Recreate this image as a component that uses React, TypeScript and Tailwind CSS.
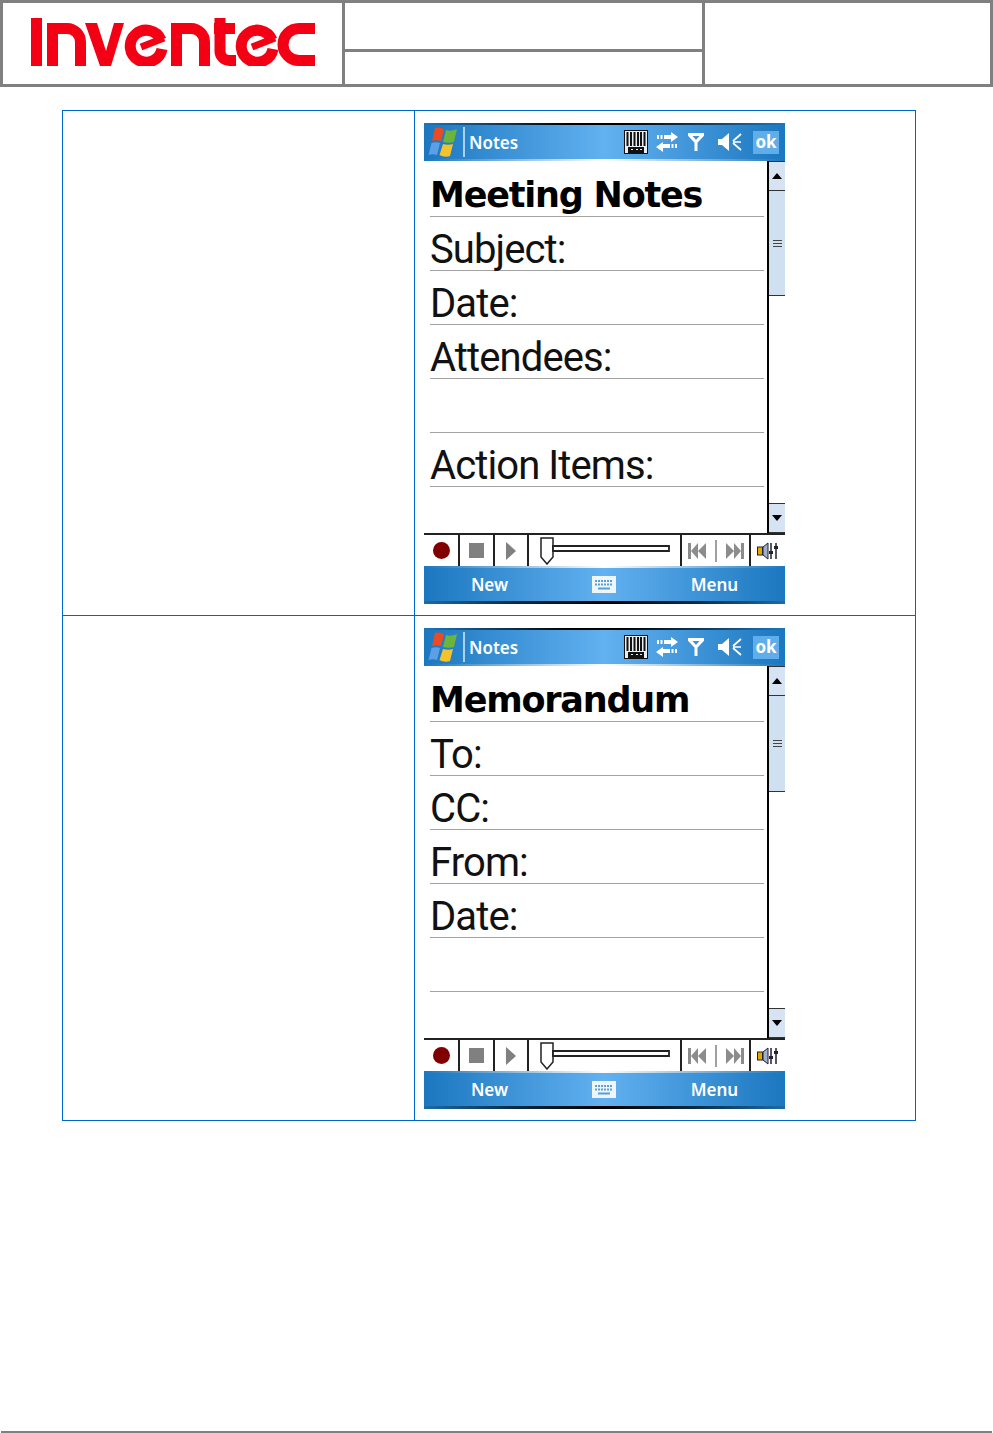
const TAHOMA = "font-['Noto_Sans','DejaVu_Sans',sans-serif]"

function Logo() {
  return (
    <svg width="284" height="48" viewBox="0 0 284 48" fill="none" stroke="#f40015" strokeWidth="11">
      <rect x="0" y="0" width="11" height="48" fill="#f40015" stroke="none" />
      <path d="M21.5 48V10.5H36A13.5 13.5 0 0 1 49.5 24V48" />
      <path d="M54 5H66L75 33L83 5H93L80 48H69Z" fill="#f40015" stroke="none" />
      <path d="M130 22A16 16 0 1 0 131 31" />
      <path d="M110 29L133 20" strokeWidth="7" />
      <path d="M145.5 48V10.5H160A13.5 13.5 0 0 1 173.5 24V48" />
      <path d="M189 0V33A9.5 9.5 0 0 0 198.5 42.5H205M183 10.5H204" />
      <path d="M241 22A16 16 0 1 0 242 31" />
      <path d="M221 29L244 20" strokeWidth="7" />
      <path d="M284 10.5H268A16 16 0 0 0 268 42.5H284" />
    </svg>
  )
}

function WinFlag() {
  return (
    <svg width="30" height="30" viewBox="0 0 30 30">
      <path d="M7 1C10 0 13 1 16 2L13 14C10 13 6 13 4 14Z" fill="#ea4a24" />
      <path d="M18 3C21 4 25 4 29 2L26 15C23 16 19 16 15 15Z" fill="#6cb43a" />
      <path d="M3.500 16C6 15 9 15 12 16L9 28C6 27 3 27 0.500 28Z" fill="#5b9fe6" />
      <path d="M15 17C18 18 22 18 25 17L22 29C19 30 15 30 11.500 28Z" fill="#f4c22a" />
    </svg>
  )
}

function StatusIcons() {
  return (
    <div className="ml-auto mr-[6px] flex items-center">
      <svg width="24" height="24" viewBox="0 0 24 24" className="mr-[8px]">
        <rect x="0.5" y="0.5" width="23" height="23" fill="#e8eef4" stroke="#111" />
        <path d="M3.500 2V16M7 2V16M10.500 2V16M14 2V16M17 2V16M20.500 2V16" stroke="#111" strokeWidth="2" />
        <rect x="4" y="17" width="16" height="6" fill="#111" />
        <path d="M7 19.500H9M12 19.500H14M16 19.500H18" stroke="#eee" />
      </svg>
      <svg width="22" height="20" viewBox="0 0 22 20" className="mr-[10px]" fill="#fff">
        <path d="M8 3H15V0L22 5L15 10V7H8ZM1 3H3V7H1ZM4.5 3H6.5V7H4.5Z" />
        <path d="M14 16H7V20L0 15L7 10V12H14ZM21 12H19V16H21ZM17.5 12H15.500V16H17.500Z" />
      </svg>
      <svg width="16" height="18" viewBox="0 0 16 18" className="mr-[14px]" fill="none" stroke="#fff" strokeWidth="3">
        <path d="M1 1.500H15L8 9ZM8 8V18" />
      </svg>
      <svg width="24" height="20" viewBox="0 0 24 20" className="mr-[11px]" fill="#fff">
        <path d="M0 7H4L11 1V19L4 13H0Z" />
        <path d="M23 2L15 9M15 10H23M15 11L23 18" stroke="#fff" strokeWidth="1.700" />
      </svg>
      <div className="flex h-[23px] w-[26px] items-center justify-center bg-[#5faeea] text-[17px] font-bold text-white">ok</div>
    </div>
  )
}

function TitleBar() {
  return (
    <div className="flex h-[38px] flex-col bg-[linear-gradient(90deg,#1b77bf,#62b1f0_50%,#1b77bf)]">
      <div className="h-[2px] bg-[linear-gradient(90deg,#1b77bf,#000_40%,#000_55%,#1b77bf)]" />
      <div className="flex flex-1 items-center">
        <div className="ml-[4px] w-[30px]"><WinFlag /></div>
        <div className="ml-[5px] h-[30px] w-[2px] bg-[#a8d3f5]" />
        <span className="ml-[4px] translate-y-[1px] text-[17px] font-semibold text-white">Notes</span>
        <StatusIcons />
      </div>
      <div className="h-[2px] bg-[linear-gradient(90deg,#1b77bf,#fff_50%,#1b77bf)]" />
    </div>
  )
}

function ScrollBar({ thumb }: { thumb: number }) {
  return (
    <div className="flex w-[18px] flex-col border-l-2 border-black">
      <div className="flex h-[30px] items-center justify-center border-y border-[#333] bg-[#d5e3f2]">
        <svg width="10" height="6" viewBox="0 0 10 6"><path d="M5 0L10 6H0Z" fill="#000" /></svg>
      </div>
      <div className="flex items-center justify-center border-b border-[#333] bg-[#cfe0f1]" style={{ height: thumb }}>
        <svg width="9" height="7" viewBox="0 0 9 7"><path d="M0 0.500H9M0 3.500H9M0 6.500H9" stroke="#444" /></svg>
      </div>
      <div className="flex-1 bg-white" />
      <div className="flex h-[30px] items-center justify-center border-y border-[#333] bg-[#d5e3f2]">
        <svg width="10" height="6" viewBox="0 0 10 6"><path d="M5 6L10 0H0Z" fill="#000" /></svg>
      </div>
    </div>
  )
}

function Note({ title, rows, thumb }: { title: string; rows: string[]; thumb: number }) {
  return (
    <div className="flex h-[372px]">
      <div className="flex-1 pl-[6px] pr-[3px] pt-[2px]">
        <div className="flex h-[54px] items-end border-b border-[#a3a3a3] font-['DejaVu_Sans',sans-serif] text-[35px] font-bold leading-[42px] tracking-[-1.2px] text-black">
          {title}
        </div>
        {rows.map((row, i) => (
          <div key={i} className="flex h-[54px] items-end border-b border-[#a3a3a3] font-['Roboto',sans-serif] text-[40px] font-normal leading-[40px] tracking-[-0.9px] text-[#111]">
            {row || ' '}
          </div>
        ))}
      </div>
      <ScrollBar thumb={thumb} />
    </div>
  )
}

function MediaBar() {
  return (
    <div className="flex h-[33px] border-t-2 border-[#222] bg-white">
      <div className="flex w-[36px] items-center justify-center border-r-2 border-[#222]">
        <div className="h-[17px] w-[17px] rounded-full bg-[#800000]" />
      </div>
      <div className="flex w-[35px] items-center justify-center border-r-2 border-[#222]">
        <div className="h-[15px] w-[15px] bg-[#808080]" />
      </div>
      <div className="flex w-[34px] items-center justify-center border-r-2 border-[#222]">
        <svg width="10" height="18" viewBox="0 0 10 18"><path d="M0 0L10 9L0 18Z" fill="#808080" /></svg>
      </div>
      <div className="flex w-[153px] items-center border-r-2 border-[#222] pl-[11px]">
        <svg width="130" height="28" viewBox="0 0 130 28" fill="none" stroke="#222" strokeWidth="1.500">
          <path d="M1 1H13V20L7 27L1 20Z" fill="#fff" />
          <path d="M13 9H129V14H13Z" fill="#fff" strokeWidth="1.800" />
        </svg>
      </div>
      <div className="flex w-[69px] items-center justify-center gap-[9px] border-r-2 border-[#222]">
        <svg width="18" height="16" viewBox="0 0 18 16" fill="#8c8c8c"><path d="M0 0H3V16H0ZM3 8L10 0V16ZM10 8L18 0V16Z" /></svg>
        <div className="h-[22px] w-[2px] bg-[#a0a0a0]" />
        <svg width="18" height="16" viewBox="0 0 18 16" fill="#8c8c8c"><path d="M18 0H15V16H18ZM15 8L8 0V16ZM8 8L0 0V16Z" /></svg>
      </div>
      <div className="flex flex-1 items-center justify-center">
        <svg width="22" height="18" viewBox="0 0 22 18">
          <rect x="0.500" y="5" width="5" height="8" fill="#e0a800" stroke="#223" />
          <path d="M6 5L11 1V17L6 13Z" fill="#9fb0c8" stroke="#223" />
          <path d="M14 1V17M19 1V17" stroke="#223" strokeWidth="1.500" />
          <rect x="12" y="9" width="4" height="3" fill="#223" />
          <rect x="17" y="4" width="4" height="3" fill="#223" />
        </svg>
      </div>
    </div>
  )
}

function SoftKeys() {
  return (
    <div className="flex h-[38px] flex-col bg-[linear-gradient(90deg,#1b77bf,#62b1f0_50%,#1b77bf)]">
      <div className="h-[2px] bg-[linear-gradient(90deg,#1b77bf,#fff_50%,#1b77bf)]" />
      <div className="flex flex-1 items-center text-[17px] font-semibold text-white">
        <div className="w-[131px] text-center">New</div>
        <div className="flex w-[98px] justify-center">
          <svg width="24" height="17" viewBox="0 0 24 17">
            <rect width="24" height="17" fill="#eef6fc" />
            <path d="M3 5H21M3 8.500H21" stroke="#5b9fd8" strokeWidth="2" strokeDasharray="2 1" />
            <path d="M6 12.500H18" stroke="#5b9fd8" strokeWidth="2" />
          </svg>
        </div>
        <div className="w-[123px] text-center">Menu</div>
      </div>
      <div className="h-[3px] bg-[linear-gradient(90deg,#1b6ca8,#0a2a44_25%,#000_50%,#0a2a44_75%,#1b6ca8)]" />
    </div>
  )
}

function Phone({ title, rows, thumb }: { title: string; rows: string[]; thumb: number }) {
  return (
    <div className={`w-[361px] ${TAHOMA}`}>
      <TitleBar />
      <Note title={title} rows={rows} thumb={thumb} />
      <MediaBar />
      <SoftKeys />
    </div>
  )
}

export default function App() {
  return (
    <div className="flex h-[1433px] w-[993px] flex-col bg-white">
      <header className="grid h-[87px] grid-cols-[342px_360px_1fr] border-[3px] border-[#808080]">
        <div className="flex items-start border-r-[3px] border-[#808080] pl-[28px] pt-[15px]">
          <Logo />
        </div>
        <div className="flex flex-col border-r-[3px] border-[#808080]">
          <div className="h-[49px] border-b-[3px] border-[#808080]" />
        </div>
        <div />
      </header>

      <table className="ml-[62px] mt-[23px] w-[854px] table-fixed border-collapse">
        <tbody>
          <tr className="h-[505px]">
            <td className="w-[352px] border border-[#0066cc]" />
            <td className="border border-[#0066cc] pl-[9px] pt-[12px] align-top">
              <Phone
                title="Meeting Notes"
                rows={['Subject:', 'Date:', 'Attendees:', '', 'Action Items:']}
                thumb={105}
              />
            </td>
          </tr>
          <tr className="h-[505px]">
            <td className="border border-[#0066cc]" />
            <td className="border border-[#0066cc] pl-[9px] pt-[12px] align-top">
              <Phone
                title="Memorandum"
                rows={['To:', 'CC:', 'From:', 'Date:', '']}
                thumb={96}
              />
            </td>
          </tr>
        </tbody>
      </table>

      <div className="mx-[1px] mt-auto h-[2px] bg-[#808080]" />
    </div>
  )
}
